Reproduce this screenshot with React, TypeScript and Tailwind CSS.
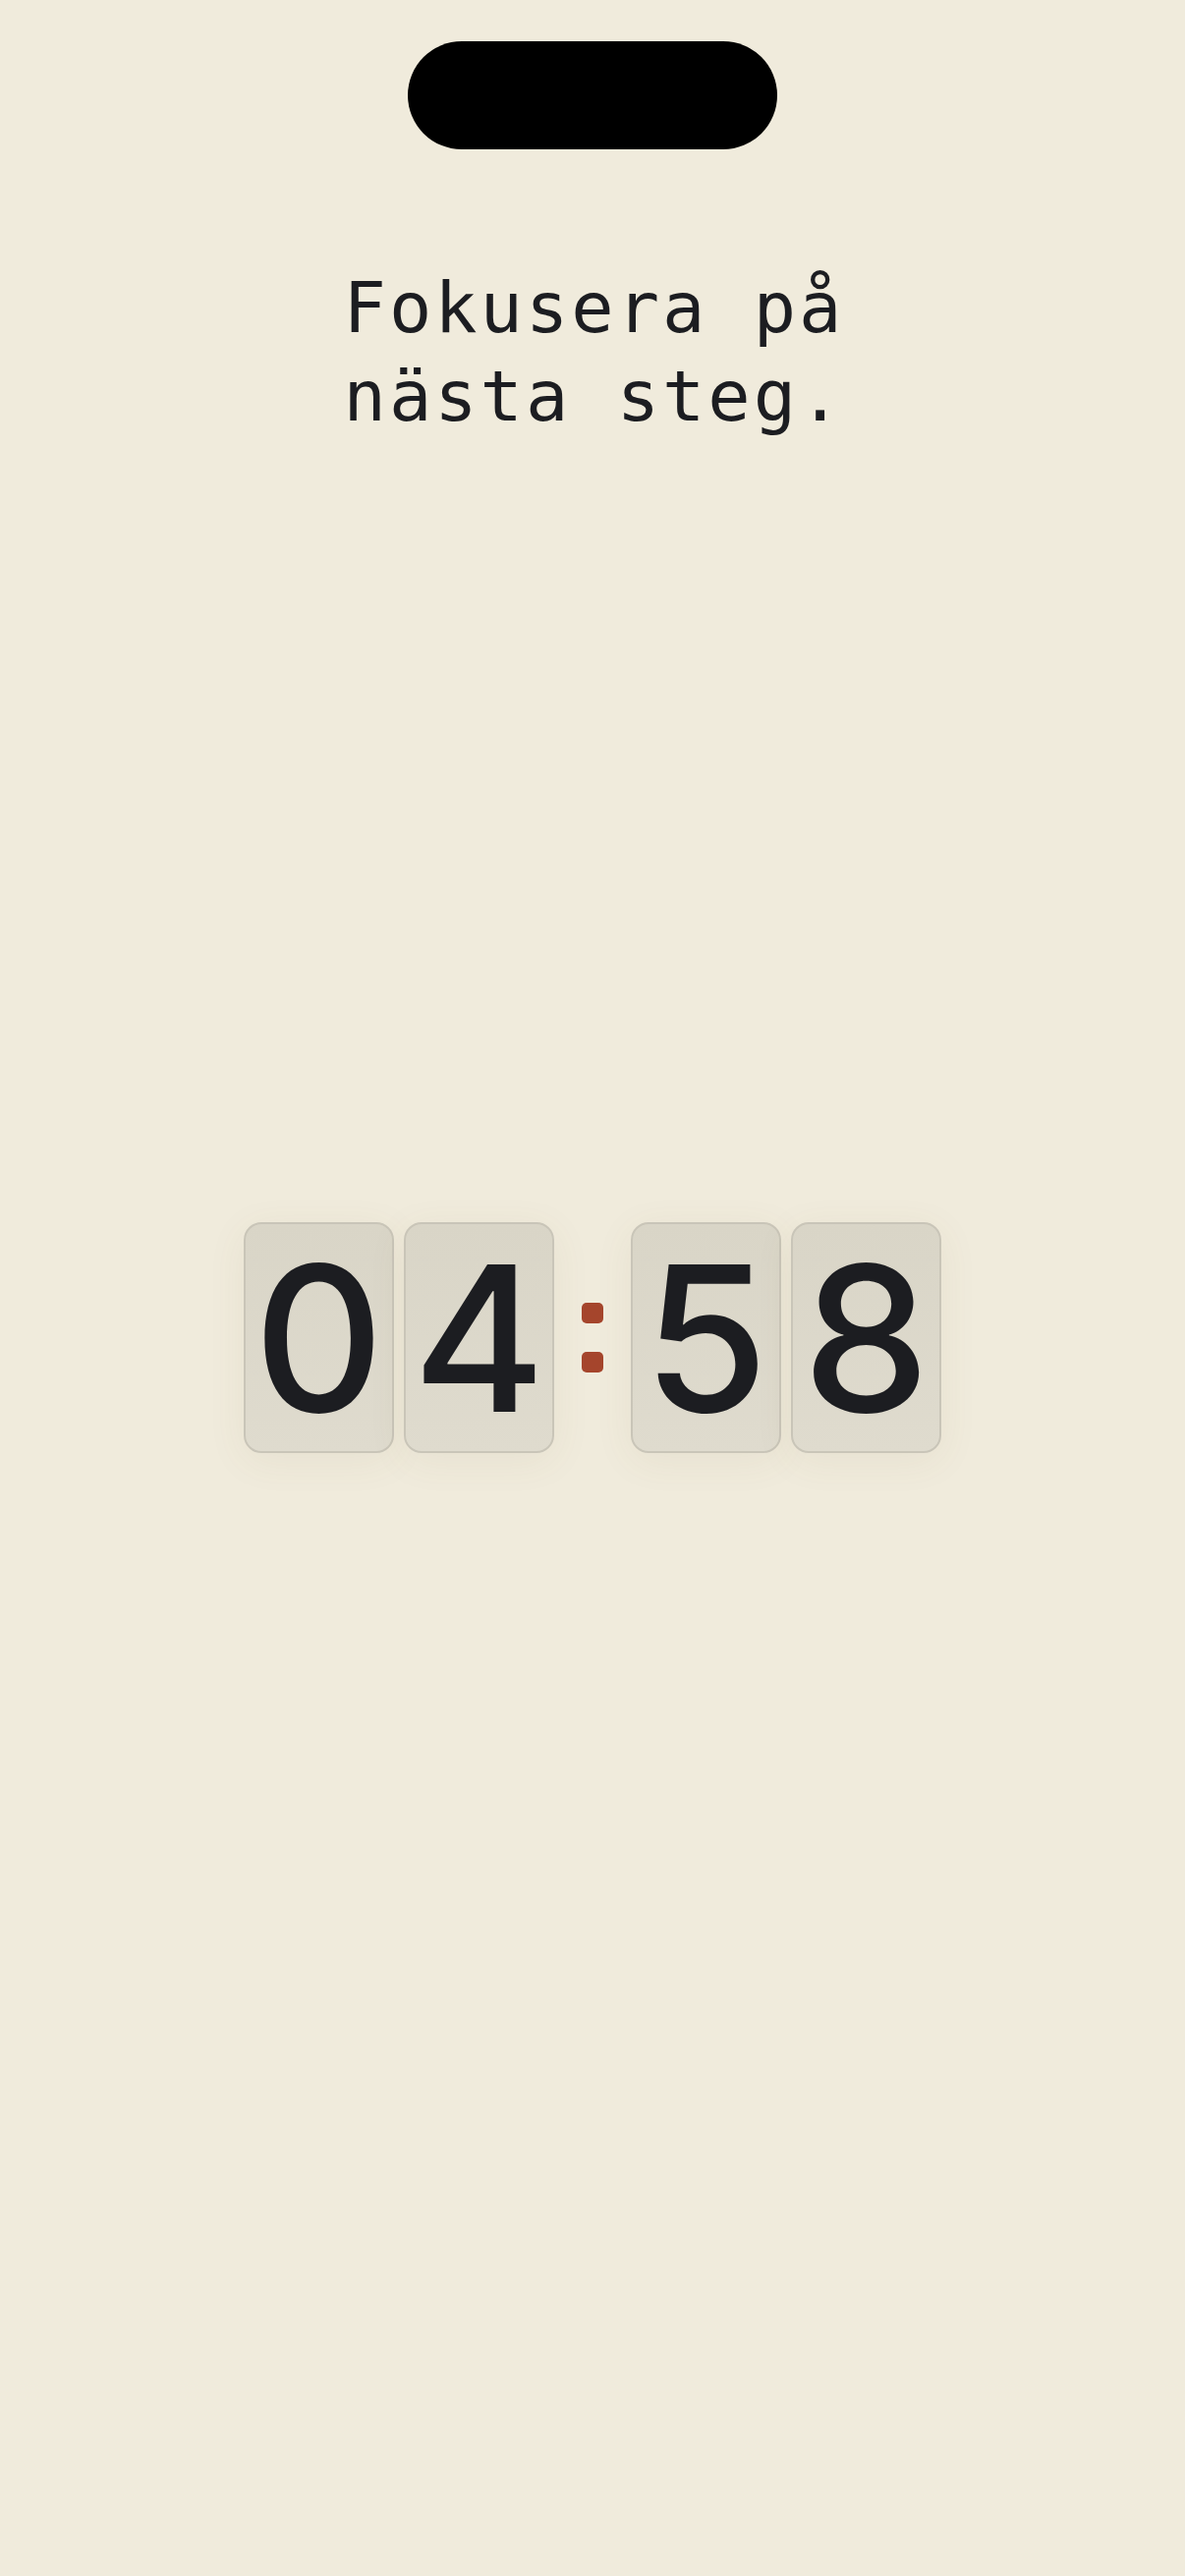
import React from "react";

function Card({ d }: { d: string }) {
  return (
    <div className="flex h-[235px] w-[153px] items-center justify-center rounded-[18px] border-2 border-[#c9c5b8] bg-gradient-to-b from-[#d9d5c7] to-[#dfdbce] shadow-[0_8px_40px_rgba(110,95,60,0.07)]">
      <span
        className="text-[206px] font-medium leading-none text-[#1c1d21]"
        style={{ fontFamily: "Inter, 'Noto Sans', sans-serif" }}
      >
        {d}
      </span>
    </div>
  );
}

export default function App() {
  return (
    <div className="flex h-[2622px] w-full flex-col items-center bg-[#f0ebdc]">
      <div className="mt-[42px] h-[110px] w-[376px] rounded-[56px] bg-black" />
      <div
        className="mt-[116px] ml-[3px] flex flex-col items-center text-[72px] leading-[90px] tracking-[3px] text-[#1c1d21]"
        style={{ fontFamily: "'DejaVu Sans Mono', 'Liberation Mono', monospace" }}
      >
        <div>Fokusera på</div>
        <div>nästa steg.</div>
      </div>
      <div className="mt-[796px] flex items-center">
        <div className="flex gap-[10px]">
          <Card d="0" />
          <Card d="4" />
        </div>
        <div className="mx-[28px] flex flex-col gap-[29px]">
          <div className="h-[21px] w-[22px] rounded-[5px] bg-[#a5452c]" />
          <div className="h-[21px] w-[22px] rounded-[5px] bg-[#a5452c]" />
        </div>
        <div className="flex gap-[10px]">
          <Card d="5" />
          <Card d="8" />
        </div>
      </div>
    </div>
  );
}
